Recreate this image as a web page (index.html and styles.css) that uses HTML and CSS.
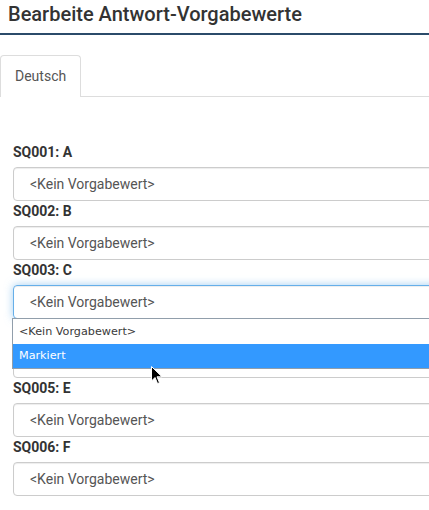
FILE: index.html
```html
<!DOCTYPE html>
<html lang="de">
<head>
<meta charset="utf-8">
<title>Bearbeite Antwort-Vorgabewerte</title>
<link rel="stylesheet" href="styles.css">
</head>
<body>
<div class="page">
  <div class="header">
    <h1 class="title">Bearbeite Antwort-Vorgabewerte</h1>
  </div>
  <div class="tabs">
    <div class="tab active">Deutsch</div>
  </div>
  <div class="form">
    <div class="field">
      <div class="label">SQ001: A</div>
      <div class="select">&lt;Kein Vorgabewert&gt;</div>
    </div>
    <div class="field">
      <div class="label">SQ002: B</div>
      <div class="select">&lt;Kein Vorgabewert&gt;</div>
    </div>
    <div class="field open">
      <div class="label">SQ003: C</div>
      <div class="select focus">&lt;Kein Vorgabewert&gt;</div>
      <div class="dropdown">
        <div class="option">&lt;Kein Vorgabewert&gt;</div>
        <div class="option selected">Markiert</div>
      </div>
    </div>
    <div class="field covered">
      <div class="label"><span class="hidden-text">SQ004: D</span></div>
      <div class="select"><span class="hidden-text">&lt;Kein Vorgabewert&gt;</span></div>
    </div>
    <div class="field">
      <div class="label">SQ005: E</div>
      <div class="select">&lt;Kein Vorgabewert&gt;</div>
    </div>
    <div class="field">
      <div class="label">SQ006: F</div>
      <div class="select">&lt;Kein Vorgabewert&gt;</div>
    </div>
  </div>
  <svg class="cursor" width="12" height="19" viewBox="0 0 12 19">
    <path d="M0.5 0.5 L0.5 15 L4 11.5 L6.5 17.5 L8.5 16.7 L6 10.8 L11 10.8 Z" fill="#000" stroke="#fff" stroke-width="1"/>
  </svg>
</div>
</body>
</html>
```
FILE: styles.css
```css
html, body {
  margin: 0;
  padding: 0;
  background: #fff;
}
body {
  width: 429px;
  height: 510px;
  overflow: hidden;
  font-family: Roboto, "Liberation Sans", sans-serif;
}
.page {
  position: relative;
  width: 429px;
}
.header {
  height: 33px;
  padding: 0 8px;
  border-bottom: 2px solid #2b4b6a;
}
.title {
  margin: 0;
  padding-top: 2px;
  font-size: 20px;
  line-height: 24px;
  font-weight: 500;
  color: #333;
}
.tabs {
  display: flex;
  margin-top: 20px;
  border-bottom: 1px solid #ddd;
}
.tab {
  box-sizing: border-box;
  width: 81px;
  height: 42px;
  margin-bottom: -1px;
  padding: 0 14px;
  border: 1px solid #ddd;
  border-bottom: none;
  border-radius: 4px 4px 0 0;
  background: #fff;
  font-size: 14px;
  line-height: 40px;
  color: #555;
}
.form {
  padding: 45px 0 0 13px;
}
.field {
  position: relative;
}
.label {
  height: 20px;
  font-size: 14px;
  font-weight: 700;
  line-height: 20px;
  margin-bottom: 5px;
  color: #333;
}
.select {
  box-sizing: border-box;
  width: 520px;
  height: 34px;
  padding-left: 16px;
  border: 1px solid #ccc;
  border-radius: 4px;
  box-shadow: inset 0 1px 1px rgba(0, 0, 0, 0.075);
  font-size: 14px;
  line-height: 32px;
  color: #555;
}
.select.focus {
  border-color: #66afe9;
  box-shadow: inset 0 1px 1px rgba(0, 0, 0, 0.075), 0 0 8px rgba(102, 175, 233, 0.6);
}
.hidden-text {
  visibility: hidden;
}
.dropdown {
  position: absolute;
  top: 58px;
  left: -1px;
  width: 600px;
  border: 1px solid #919eab;
  border-right: none;
  background: #fff;
  font-family: "DejaVu Sans", sans-serif;
  font-size: 11.2px;
  z-index: 2;
}
.option {
  height: 25px;
  line-height: 25px;
  padding-left: 6px;
  color: #3a3a3a;
}
.option.selected {
  height: 24px;
  line-height: 24px;
  background: #3399ff;
  color: #fff;
}
.cursor {
  position: absolute;
  left: 151px;
  top: 366px;
  z-index: 3;
}
```
